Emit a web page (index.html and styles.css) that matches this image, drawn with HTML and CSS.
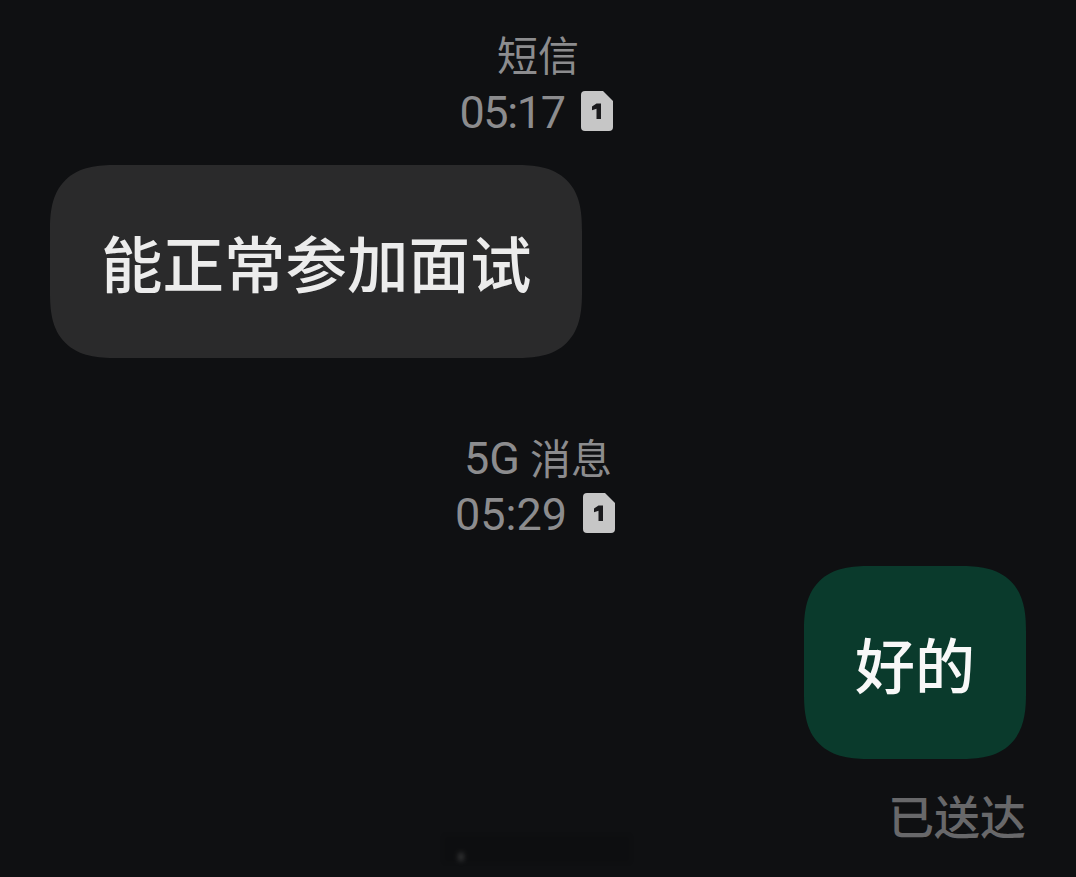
FILE: index.html
```html
<!DOCTYPE html>
<html lang="zh-CN">
<head>
  <meta charset="UTF-8" />
  <title>短信</title>
  <link rel="stylesheet" href="styles.css">
</head>
<body>
<div class="thread">
  <div class="meta meta-first">
    <div class="meta-type">短信</div>
    <div class="meta-time">
      <span class="time-narrow">05:17</span>
      <svg class="sim" viewBox="0 0 32 40"><path d="M4 0H22L32 10V36a4 4 0 0 1-4 4H4a4 4 0 0 1-4-4V4a4 4 0 0 1 4-4Z" fill="#c6c6c6"/><path d="M11 15.5 15.5 12.5H20V28H15.5V17.8L11 19.3Z" fill="#1a1a1c"/></svg>
    </div>
  </div>
  <div class="row row-in">
    <div class="bubble bubble-in">能正常参加面试</div>
  </div>
  <div class="meta meta-second">
    <div class="meta-type"><span class="latin">5G</span> 消息</div>
    <div class="meta-time">
      <span>05:29</span>
      <svg class="sim" viewBox="0 0 32 40"><path d="M4 0H22L32 10V36a4 4 0 0 1-4 4H4a4 4 0 0 1-4-4V4a4 4 0 0 1 4-4Z" fill="#c6c6c6"/><path d="M11 15.5 15.5 12.5H20V28H15.5V17.8L11 19.3Z" fill="#1a1a1c"/></svg>
    </div>
  </div>
  <div class="row row-out">
    <div class="bubble bubble-out">好的</div>
  </div>
  <div class="status">已送达</div>
</div>
<div class="smudge"></div>
</body>
</html>
```

FILE: styles.css
```css
* {
  margin: 0;
  padding: 0;
  box-sizing: border-box;
}
html, body {
  width: 1076px;
  height: 877px;
  overflow: hidden;
  background: #0f1012;
  font-family: Roboto, "Noto Sans CJK SC", sans-serif;
}
.thread {
  display: flex;
  flex-direction: column;
  padding: 0 50px;
}
.meta {
  display: flex;
  flex-direction: column;
  align-items: center;
  color: #8c8c8e;
}
.meta-first {
  padding-top: 33px;
  margin-bottom: 25px;
}
.meta-first .meta-type {
  line-height: 49px;
}
.meta-first .meta-time {
  margin-right: 4px;
}
.meta-second {
  padding-top: 77px;
  margin-bottom: 24px;
}
.meta-second .meta-type {
  line-height: 47px;
}
.meta-second .meta-time {
  margin-right: 6px;
}
.meta-type {
  font-size: 41px;
  line-height: 50px;
}
.latin {
  font-size: 45px;
}
.meta-time {
  display: flex;
  align-items: center;
  gap: 16px;
  font-size: 45px;
  line-height: 54px;
}
.meta-time span {
  padding-top: 4px;
}
.time-narrow {
  letter-spacing: -1.4px;
}
.sim {
  width: 32px;
  height: 40px;
}
.row {
  display: flex;
}
.row-out {
  justify-content: flex-end;
}
.bubble {
  display: flex;
  align-items: center;
  height: 193px;
  font-size: 61.5px;
  font-weight: 500;
  border-radius: 66px;
  corner-shape: superellipse(1.4);
  color: #ececec;
}
.bubble-in {
  width: 532px;
  padding-left: 51px;
  background: #2a2a2b;
}
.bubble-out {
  width: 222px;
  padding-left: 51px;
  font-size: 60px;
  background: #0a3a2c;
  color: #f8f8f8;
}
.status {
  margin-top: 34px;
  text-align: right;
  font-size: 46px;
  font-weight: 500;
  line-height: 50px;
  color: #68686a;
}
.smudge {
  position: absolute;
  left: 444px;
  top: 836px;
  width: 186px;
  height: 26px;
  background:
    radial-gradient(ellipse 5px 7px at 17px 21px, rgba(170, 170, 170, 0.3), transparent),
    rgba(0, 0, 0, 0.1);
  filter: blur(2px);
}
```
